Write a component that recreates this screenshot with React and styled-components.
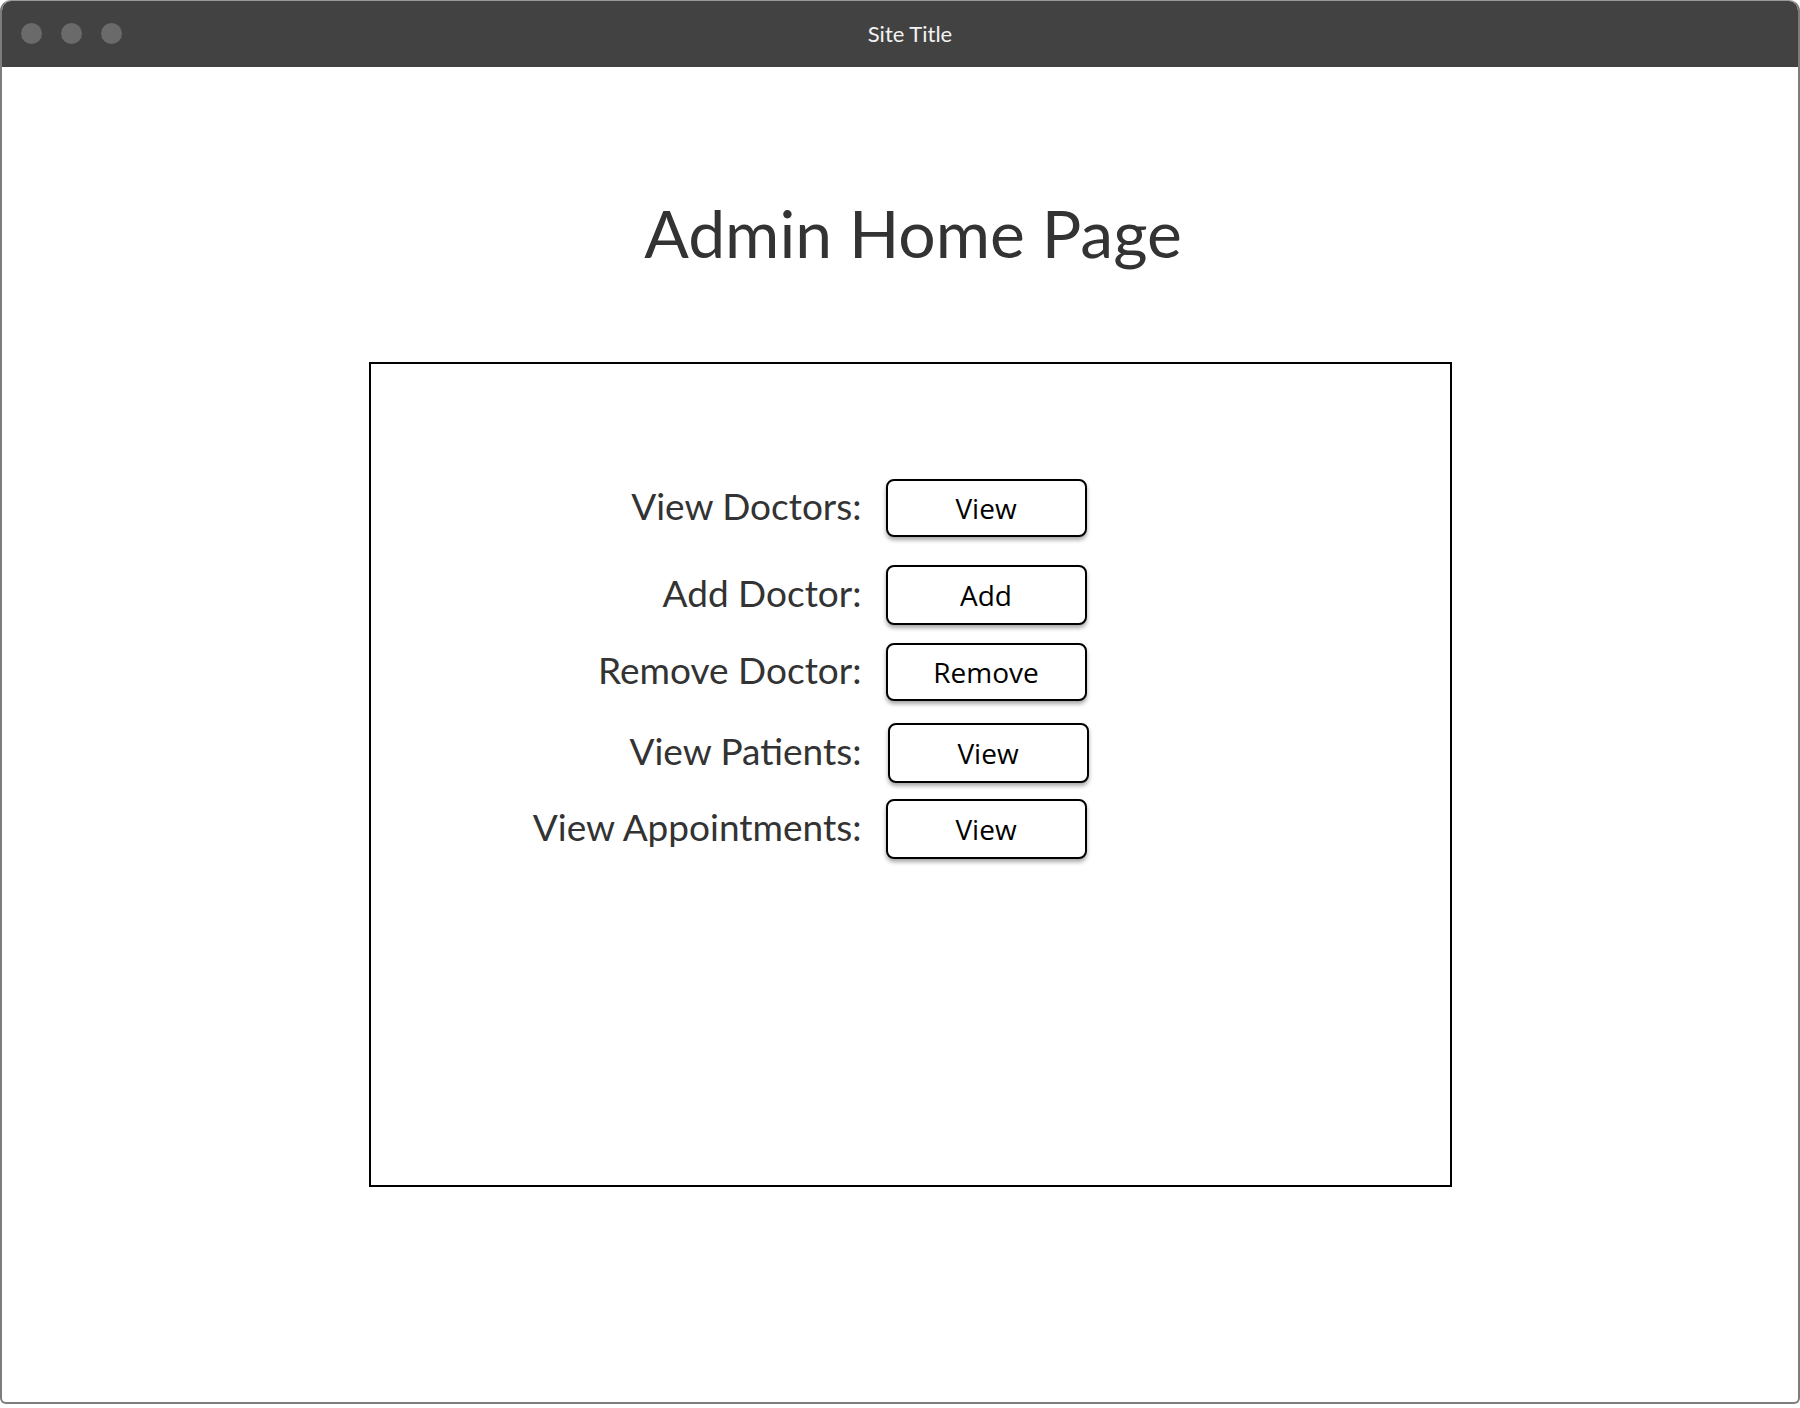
import React from 'react';
import styled, { createGlobalStyle } from 'styled-components';

const GlobalStyle = createGlobalStyle`
  html, body {
    margin: 0;
    padding: 0;
    background: #fff;
  }
  * {
    box-sizing: border-box;
  }
`;

const Window = styled.div`
  width: 1800px;
  height: 1404px;
  border: 2px solid #7d7d7d;
  border-top: 1px solid #9a9a9a;
  border-radius: 11px 11px 6px 6px;
  overflow: hidden;
  display: flex;
  flex-direction: column;
  background: #fff;
`;

const TitleBar = styled.div`
  height: 66px;
  flex-shrink: 0;
  background: #424242;
  display: flex;
  align-items: center;
  position: relative;
  padding-left: 19px;
  gap: 19px;
`;

const Dot = styled.span`
  width: 21px;
  height: 21px;
  border-radius: 50%;
  background: #6a6a6a;
  margin-top: -2px;
`;

const SiteTitle = styled.div`
  position: absolute;
  left: 0;
  right: 0;
  top: 0;
  bottom: 0;
  display: flex;
  align-items: center;
  justify-content: center;
  padding-left: 20px;
  padding-bottom: 2px;
  font-family: Lato, sans-serif;
  font-size: 22px;
  color: #f2f2f2;
`;

const Content = styled.div`
  flex: 1;
  display: flex;
  flex-direction: column;
  align-items: center;
  padding-left: 20px;
`;

const Heading = styled.h1`
  margin: 126px 0 0;
  padding-left: 6px;
  font-family: Lato, sans-serif;
  font-weight: 400;
  font-size: 66px;
  line-height: 1.2;
  color: #333;
`;

const Panel = styled.div`
  width: 1083px;
  height: 825px;
  margin-top: 90px;
  border: 2px solid #000;
  padding-top: 115px;
  display: flex;
  flex-direction: column;
`;

const Row = styled.div`
  display: flex;
  align-items: center;
  gap: 24px;
  margin-top: ${p => p.$mt}px;
`;

const Label = styled.div`
  width: 491px;
  padding-bottom: 6px;
  text-align: right;
  font-family: Lato, sans-serif;
  font-size: 37px;
  color: #333;
`;

const ActionButton = styled.button`
  width: 201px;
  height: ${p => p.$h}px;
  margin-left: ${p => p.$shift || 0}px;
  border: 2px solid #000;
  border-radius: 8px;
  background: #fff;
  box-shadow: 0 3px 4px rgba(0, 0, 0, 0.35);
  font-family: "Open Sans", sans-serif;
  font-size: 28px;
  color: #000;
  padding: 0;
  cursor: pointer;
`;

const rows = [
  { label: 'View Doctors:', action: 'View', mt: 0, h: 58 },
  { label: 'Add Doctor:', action: 'Add', mt: 28, h: 60 },
  { label: 'Remove Doctor:', action: 'Remove', mt: 18, h: 58 },
  { label: 'View Patients:', action: 'View', mt: 22, h: 60, shift: 2 },
  { label: 'View Appointments:', action: 'View', mt: 16, h: 60 },
];

export default function App() {
  return (
    <>
      <GlobalStyle />
      <Window>
        <TitleBar>
          <Dot />
          <Dot />
          <Dot />
          <SiteTitle>Site Title</SiteTitle>
        </TitleBar>
        <Content>
          <Heading>Admin Home Page</Heading>
          <Panel>
            {rows.map(r => (
              <Row key={r.label} $mt={r.mt}>
                <Label>{r.label}</Label>
                <ActionButton $h={r.h} $shift={r.shift}>{r.action}</ActionButton>
              </Row>
            ))}
          </Panel>
        </Content>
      </Window>
    </>
  );
}
